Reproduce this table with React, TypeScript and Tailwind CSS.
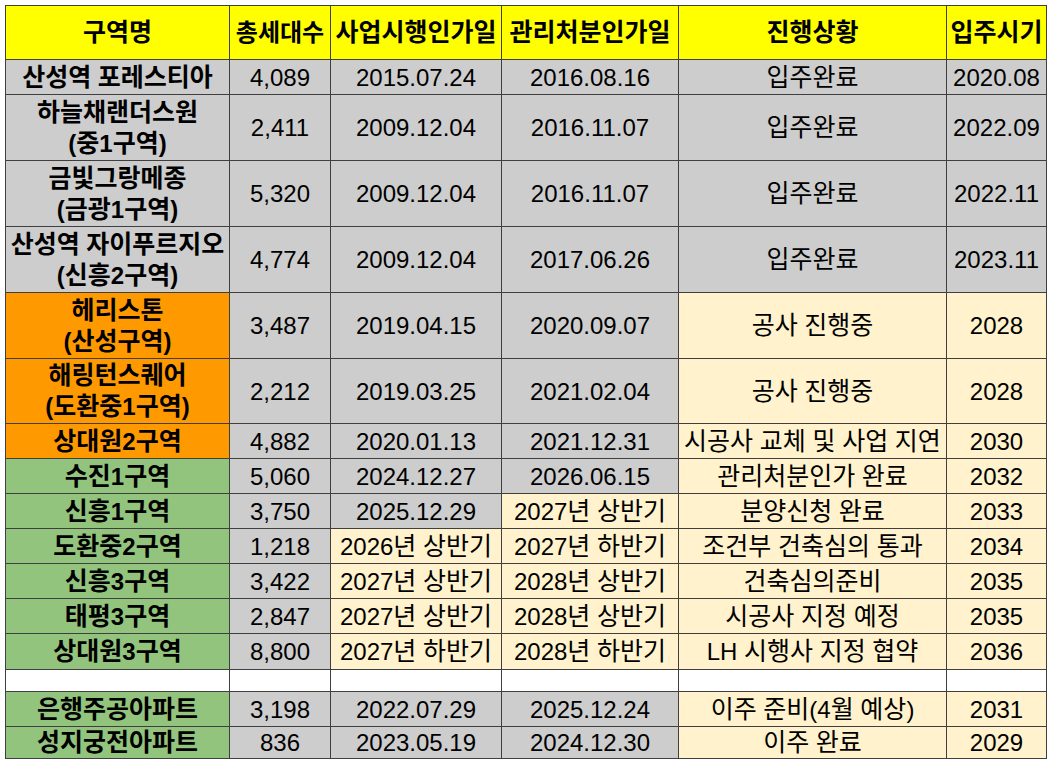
const GRAY = 'bg-[#cdcdcd]';
const CREAM = 'bg-[#fff2cc]';
const ORANGE = 'bg-[#ff9900]';
const GREEN = 'bg-[#93c47d]';
const WHITE = 'bg-white';

type Cell = { text: string; bg: string };
type Row = {
  name: string[];
  nameBg: string;
  h: string;
  cells: Cell[];
};

const done = (a: string, b: string, c: string, d: string): Cell[] => [
  { text: a, bg: GRAY },
  { text: b, bg: GRAY },
  { text: c, bg: GRAY },
  { text: '입주완료', bg: GRAY },
  { text: d, bg: GRAY },
];

const rows: Row[] = [
  { name: ['산성역 포레스티아'], nameBg: GRAY, h: 'h-[35px]', cells: done('4,089', '2015.07.24', '2016.08.16', '2020.08') },
  { name: ['하늘채랜더스원', '(중1구역)'], nameBg: GRAY, h: 'h-[66px]', cells: done('2,411', '2009.12.04', '2016.11.07', '2022.09') },
  { name: ['금빛그랑메종', '(금광1구역)'], nameBg: GRAY, h: 'h-[66px]', cells: done('5,320', '2009.12.04', '2016.11.07', '2022.11') },
  { name: ['산성역 자이푸르지오', '(신흥2구역)'], nameBg: GRAY, h: 'h-[66px]', cells: done('4,774', '2009.12.04', '2017.06.26', '2023.11') },
  {
    name: ['헤리스톤', '(산성구역)'], nameBg: ORANGE, h: 'h-[66px]',
    cells: [
      { text: '3,487', bg: GRAY },
      { text: '2019.04.15', bg: GRAY },
      { text: '2020.09.07', bg: GRAY },
      { text: '공사 진행중', bg: CREAM },
      { text: '2028', bg: CREAM },
    ],
  },
  {
    name: ['해링턴스퀘어', '(도환중1구역)'], nameBg: ORANGE, h: 'h-[65px]',
    cells: [
      { text: '2,212', bg: GRAY },
      { text: '2019.03.25', bg: GRAY },
      { text: '2021.02.04', bg: GRAY },
      { text: '공사 진행중', bg: CREAM },
      { text: '2028', bg: CREAM },
    ],
  },
  {
    name: ['상대원2구역'], nameBg: ORANGE, h: 'h-[35px]',
    cells: [
      { text: '4,882', bg: GRAY },
      { text: '2020.01.13', bg: GRAY },
      { text: '2021.12.31', bg: GRAY },
      { text: '시공사 교체 및 사업 지연', bg: CREAM },
      { text: '2030', bg: CREAM },
    ],
  },
  {
    name: ['수진1구역'], nameBg: GREEN, h: 'h-[35px]',
    cells: [
      { text: '5,060', bg: GRAY },
      { text: '2024.12.27', bg: GRAY },
      { text: '2026.06.15', bg: GRAY },
      { text: '관리처분인가 완료', bg: CREAM },
      { text: '2032', bg: CREAM },
    ],
  },
  {
    name: ['신흥1구역'], nameBg: GREEN, h: 'h-[35px]',
    cells: [
      { text: '3,750', bg: GRAY },
      { text: '2025.12.29', bg: GRAY },
      { text: '2027년 상반기', bg: CREAM },
      { text: '분양신청 완료', bg: CREAM },
      { text: '2033', bg: CREAM },
    ],
  },
  {
    name: ['도환중2구역'], nameBg: GREEN, h: 'h-[35px]',
    cells: [
      { text: '1,218', bg: GRAY },
      { text: '2026년 상반기', bg: CREAM },
      { text: '2027년 하반기', bg: CREAM },
      { text: '조건부 건축심의 통과', bg: CREAM },
      { text: '2034', bg: CREAM },
    ],
  },
  {
    name: ['신흥3구역'], nameBg: GREEN, h: 'h-[35px]',
    cells: [
      { text: '3,422', bg: GRAY },
      { text: '2027년 상반기', bg: CREAM },
      { text: '2028년 상반기', bg: CREAM },
      { text: '건축심의준비', bg: CREAM },
      { text: '2035', bg: CREAM },
    ],
  },
  {
    name: ['태평3구역'], nameBg: GREEN, h: 'h-[35px]',
    cells: [
      { text: '2,847', bg: GRAY },
      { text: '2027년 상반기', bg: CREAM },
      { text: '2028년 상반기', bg: CREAM },
      { text: '시공사 지정 예정', bg: CREAM },
      { text: '2035', bg: CREAM },
    ],
  },
  {
    name: ['상대원3구역'], nameBg: GREEN, h: 'h-[36px]',
    cells: [
      { text: '8,800', bg: GRAY },
      { text: '2027년 하반기', bg: CREAM },
      { text: '2028년 하반기', bg: CREAM },
      { text: 'LH 시행사 지정 협약', bg: CREAM },
      { text: '2036', bg: CREAM },
    ],
  },
  {
    name: [''], nameBg: WHITE, h: 'h-[22px]',
    cells: [
      { text: '', bg: WHITE },
      { text: '', bg: WHITE },
      { text: '', bg: WHITE },
      { text: '', bg: WHITE },
      { text: '', bg: WHITE },
    ],
  },
  {
    name: ['은행주공아파트'], nameBg: GREEN, h: 'h-[35px]',
    cells: [
      { text: '3,198', bg: GRAY },
      { text: '2022.07.29', bg: GRAY },
      { text: '2025.12.24', bg: GRAY },
      { text: '이주 준비(4월 예상)', bg: CREAM },
      { text: '2031', bg: CREAM },
    ],
  },
  {
    name: ['성지궁전아파트'], nameBg: GREEN, h: 'h-[32px]',
    cells: [
      { text: '836', bg: GRAY },
      { text: '2023.05.19', bg: GRAY },
      { text: '2024.12.30', bg: GRAY },
      { text: '이주 완료', bg: CREAM },
      { text: '2029', bg: CREAM },
    ],
  },
];

const headers = ['구역명', '총세대수', '사업시행인가일', '관리처분인가일', '진행상황', '입주시기'];

const cellBase =
  'border border-[#3f3f3f] p-0 text-center align-middle whitespace-nowrap text-black text-[24px] leading-[31px]';

const HANGUL = /[\u3131-\u318e\uac00-\ud7a3]/;

// Hangul is set a touch larger than the Latin digits, like the sheet's mixed fonts
function Mixed({ text }: { text: string }) {
  const parts = text.split(/([\u3131-\u318e\uac00-\ud7a3]+)/);
  return (
    <>
      {parts.map((p, i) =>
        p === '' ? null : HANGUL.test(p) ? (
          <span key={i} className="text-[25px] leading-none">{p}</span>
        ) : (
          <span key={i} className="text-[24px] leading-none">{p}</span>
        )
      )}
    </>
  );
}

export default function App() {
  return (
    <div
      className="w-[1060px] h-[772px] bg-white overflow-hidden pt-[5px] pl-[5px]"
      style={{ fontFamily: '"Liberation Sans", "Noto Sans CJK KR", Arial, sans-serif' }}
    >
      <table className="border-collapse table-fixed w-[1041px]">
        <colgroup>
          <col className="w-[224px]" />
          <col className="w-[101px]" />
          <col className="w-[171px]" />
          <col className="w-[177px]" />
          <col className="w-[268px]" />
          <col className="w-[100px]" />
        </colgroup>
        <thead>
          <tr className="h-[54px]">
            {headers.map((h) => (
              <th key={h} className={`${cellBase} bg-[#ffff00] font-bold`}>
                <span className={`${h === '총세대수' ? 'text-[24px]' : 'text-[25px]'} leading-none`}>{h}</span>
              </th>
            ))}
          </tr>
        </thead>
        <tbody>
          {rows.map((r, i) => (
            <tr key={i} className={r.h}>
              <td className={`${cellBase} ${r.nameBg} font-bold`}>
                {r.name.map((n, j) => (
                  <div key={j}>
                    <Mixed text={n} />
                  </div>
                ))}
              </td>
              {r.cells.map((c, j) => (
                <td key={j} className={`${cellBase} ${c.bg}`}>
                  <Mixed text={c.text} />
                </td>
              ))}
            </tr>
          ))}
        </tbody>
      </table>
    </div>
  );
}
